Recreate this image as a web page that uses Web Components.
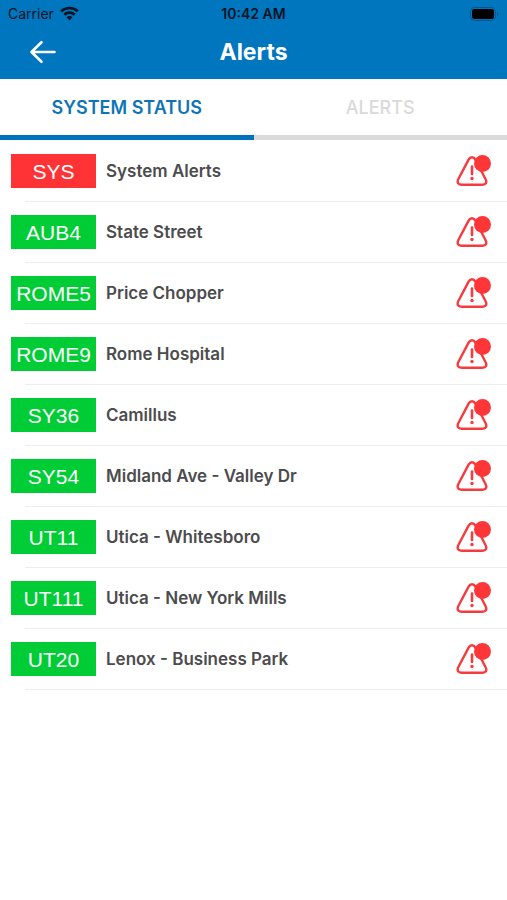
<!DOCTYPE html>
<html lang="en">
<head>
<meta charset="utf-8">
<meta name="viewport" content="width=device-width, initial-scale=1">
<title>Alerts</title>
<style>
body { margin: 0; background: #fff; font-family: Inter, "Liberation Sans", sans-serif; font-optical-sizing: none; }
</style>
</head>
<body>
<alerts-app></alerts-app>

<template id="status-bar">
<style>
:host { display: grid; grid-template-columns: 1fr auto 1fr; align-items: center; height: 28px; padding: 0 8px; background: #0076be; color: #04131f; font-size: 14px; line-height: 20px; }
.left { display: flex; align-items: center; gap: 6px; }
.time { font-weight: 600; }
.battery { justify-self: end; }
svg { display: block; }
</style>
<span class="left"><span>Carrier</span>
<svg width="19" height="16" viewBox="0 0 19 16" aria-hidden="true"><g fill="none" stroke="#04131f" stroke-width="2.600"><path d="M1.200 5.400C5.800.9 13.200.9 17.800 5.400"/><path d="M4.300 8.700c2.900-2.800 7.500-2.800 10.400 0"/></g><path d="M9.500 14.200 6.500 11.200c1.700-1.600 4.300-1.600 6 0z" fill="#04131f"/></svg></span>
<span class="time"><slot></slot></span>
<svg class="battery" width="29" height="14" viewBox="0 0 29 14" aria-hidden="true"><rect x=".5" y=".5" width="25" height="13" rx="4" fill="none" stroke="#03578c"/><rect x="2" y="2" width="22" height="10" rx="2.500" fill="#000"/><path d="M27 5v4c2-.8 2-3.200 0-4z" fill="#03578c"/></svg>
</template>

<template id="nav-header">
<style>
:host { display: grid; grid-template-columns: 1fr auto 1fr; align-items: center; height: 51px; padding: 0 23px; box-sizing: border-box; background: #0076be; color: #fff; }
button { justify-self: start; padding: 4px 6px 8px; border: 0; background: none; color: inherit; }
svg { display: block; }
h1 { margin: 0; padding-bottom: 4px; font-size: 23px; line-height: 28px; font-weight: 700; }
</style>
<button type="button" aria-label="Back"><svg width="28" height="24" viewBox="0 0 28 24" fill="none" stroke="#fff" stroke-width="2.600" stroke-linecap="round" stroke-linejoin="round" aria-hidden="true"><path d="M25.500 12H3M12.500 2.200 2.500 12l10 9.800"/></svg></button>
<h1><slot></slot></h1>
</template>

<template id="tab-strip">
<style>
:host { display: flex; background: #fff; }
</style>
<slot></slot>
</template>

<template id="tab-item">
<style>
:host { display: block; flex: 1; }
button { display: block; width: 100%; height: 61px; padding: 2px 0 0; border: 0; border-bottom: 5px solid #dadada; background: none; color: #dadada; font: 500 18px/24px Inter, "Liberation Sans", sans-serif; font-optical-sizing: none; }
:host([selected]) button { color: #0f74b7; border-color: #0072bb; font-weight: 600; }
</style>
<button type="button" role="tab"><slot></slot></button>
</template>

<template id="alert-icon">
<style>
:host { display: block; }
svg { display: block; }
</style>
<svg width="36" height="34" viewBox="0 0 36 34" role="img" aria-label="Active alert"><path d="M12.600 5.600 2.500 24.800C.6 28.500 2 30.600 5.600 30.700H26.400C30 30.600 31.300 28.500 29.500 25L19.400 5.600C17.600 2.400 14.400 2.400 12.600 5.600Z" fill="none" stroke="#f53b3d" stroke-width="2.400" stroke-linejoin="round"/><path d="M16 12.500v7.500" stroke="#f53b3d" stroke-width="2.600" stroke-linecap="round"/><circle cx="16" cy="24.500" r="1.700" fill="#f53b3d"/><circle cx="26.500" cy="9.500" r="8.500" fill="#ff3638"/></svg>
</template>

<template id="route-row">
<style>
:host { display: block; }
.row { display: flex; align-items: center; gap: 10px; height: 60px; padding: 0 15px 0 11px; }
.tag { flex: none; width: 85px; height: 34px; padding-top: 1px; box-sizing: border-box; background: #00cd35; color: #fff; font: 21px/34px "Liberation Sans", sans-serif; text-align: center; }
:host([state="alert"]) .tag { background: #ff3335; }
.name { flex: 1; color: #4c4c4e; font-size: 17px; line-height: 24px; font-weight: 600; }
.line { height: 1px; margin-left: 25px; background: #ededed; }
</style>
<div class="row"><span class="tag"><slot name="code"></slot></span><span class="name"><slot></slot></span><alert-icon></alert-icon></div>
<div class="line"></div>
</template>

<template id="alerts-app">
<style>
:host { display: block; min-height: 100vh; background: #fff; }
main { padding-top: 1px; }
</style>
<status-bar>10:42 AM</status-bar>
<nav-header>Alerts</nav-header>
<tab-strip role="tablist"><tab-item selected>SYSTEM STATUS</tab-item><tab-item>ALERTS</tab-item></tab-strip>
<main>
<route-row state="alert"><span slot="code">SYS</span>System Alerts</route-row>
<route-row><span slot="code">AUB4</span>State Street</route-row>
<route-row><span slot="code">ROME5</span>Price Chopper</route-row>
<route-row><span slot="code">ROME9</span>Rome Hospital</route-row>
<route-row><span slot="code">SY36</span>Camillus</route-row>
<route-row><span slot="code">SY54</span>Midland Ave - Valley Dr</route-row>
<route-row><span slot="code">UT11</span>Utica - Whitesboro</route-row>
<route-row><span slot="code">UT111</span>Utica - New York Mills</route-row>
<route-row><span slot="code">UT20</span>Lenox - Business Park</route-row>
</main>
</template>

<script>
class TemplateElement extends HTMLElement {
  constructor() {
    super();
    const template = document.getElementById(this.localName);
    this.attachShadow({ mode: "open" }).append(template.content.cloneNode(true));
  }
}
class StatusBar extends TemplateElement {}
class NavHeader extends TemplateElement {}
class TabStrip extends TemplateElement {}
class TabItem extends TemplateElement {
  connectedCallback() {
    this.shadowRoot.querySelector("button").setAttribute("aria-selected", String(this.hasAttribute("selected")));
  }
}
class AlertIcon extends TemplateElement {}
class RouteRow extends TemplateElement {}
class AlertsApp extends TemplateElement {}
customElements.define("status-bar", StatusBar);
customElements.define("nav-header", NavHeader);
customElements.define("tab-strip", TabStrip);
customElements.define("tab-item", TabItem);
customElements.define("alert-icon", AlertIcon);
customElements.define("route-row", RouteRow);
customElements.define("alerts-app", AlertsApp);
</script>
</body>
</html>
